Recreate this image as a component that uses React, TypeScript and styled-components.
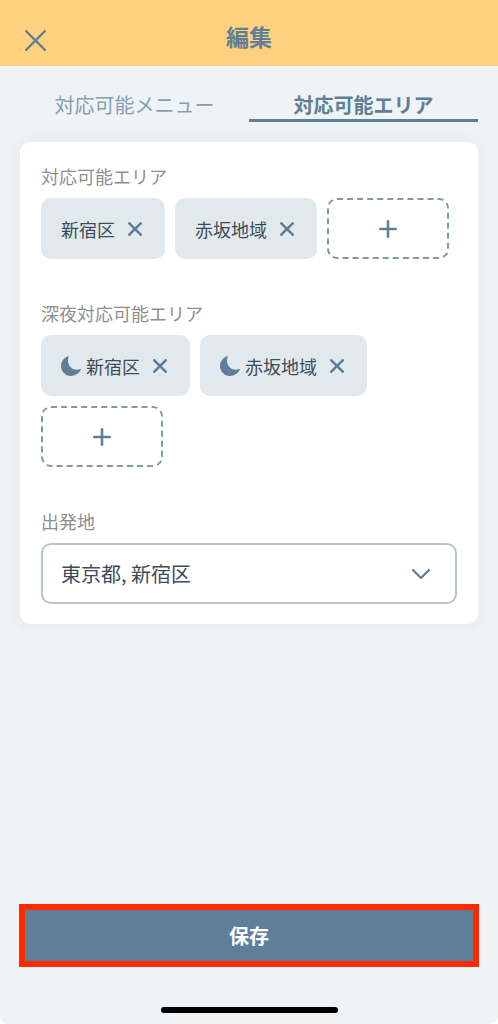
import React, { useState } from "react";
import styled, { createGlobalStyle } from "styled-components";

const GlobalStyle = createGlobalStyle`
  *, *::before, *::after { box-sizing: border-box; }
  body {
    margin: 0;
    background: #ffffff;
    font-family: "Noto Sans CJK JP", "Noto Sans", sans-serif;
    color: #3c4c59;
  }
  button, select { font-family: inherit; }
  button { margin: 0; padding: 0; border: 0; background: none; cursor: pointer; }
`;

const accent = "#5f7f98";

const Screen = styled.div`
  display: flex;
  flex-direction: column;
  min-height: 100vh;
  background: #eff3f6;
  border-radius: 0 0 8px 8px;
`;

const Header = styled.header`
  display: grid;
  grid-template-columns: 24px 1fr 24px;
  align-items: end;
  height: 66px;
  padding: 0 23px 14px;
  background: #ffd17f;
`;

const Title = styled.h1`
  margin: 0;
  font-size: 23px;
  line-height: 32px;
  font-weight: 700;
  text-align: center;
  color: ${accent};
`;

const IconButton = styled.button<{ $size: number }>`
  display: flex;
  align-items: center;
  justify-content: center;
  width: ${(p) => p.$size}px;
  height: ${(p) => p.$size}px;
  color: ${accent};
`;

const Tabs = styled.div`
  display: flex;
  padding: 0 20px;
`;

const Tab = styled.button<{ $active: boolean }>`
  flex: 1;
  height: 56px;
  padding-top: 24px;
  border-bottom: 3px solid ${(p) => (p.$active ? accent : "transparent")};
  font-size: 20px;
  line-height: 29px;
  font-weight: ${(p) => (p.$active ? 700 : 400)};
  color: ${(p) => (p.$active ? accent : "#869eb1")};
`;

const Main = styled.main`
  flex: 1;
  padding: 20px;
`;

const Card = styled.div`
  display: flex;
  flex-direction: column;
  gap: 41px;
  padding: 21px 21px 20px;
  border-radius: 10px;
  background: #ffffff;
  box-shadow: 0 0 12px 2px rgba(60, 70, 80, 0.05);
`;

const Section = styled.section`
  display: flex;
  flex-direction: column;
  gap: 9px;
`;

const Label = styled.label`
  font-size: 18px;
  line-height: 26px;
  color: #8e8e8e;
`;

const Heading = styled(Label).attrs({ as: "h2" })`
  margin: 0;
  font-weight: 400;
`;

const Chips = styled.div`
  display: flex;
  flex-wrap: wrap;
  gap: 10px;
`;

const Chip = styled.div`
  display: flex;
  align-items: center;
  height: 61px;
  padding: 0 20px;
  border-radius: 10px;
  background: #e2e9ec;
`;

const ChipText = styled.span<{ $night?: boolean }>`
  margin: 0 10px 0 ${(p) => (p.$night ? 5 : 0)}px;
  font-size: 18px;
  line-height: 26px;
`;

const AddButton = styled.button`
  display: flex;
  align-items: center;
  justify-content: center;
  width: 122px;
  height: 61px;
  border: 2px dashed #7f98ac;
  border-radius: 10px;
  color: ${accent};
`;

const SelectBox = styled.div`
  position: relative;
  color: ${accent};
`;

const Select = styled.select`
  display: block;
  width: 100%;
  height: 61px;
  padding: 0 50px 0 18px;
  border: 2px solid #b8c5cf;
  border-radius: 10px;
  appearance: none;
  background: #ffffff;
  font-size: 20px;
  color: #3c4c59;
`;

const Chevron = styled.svg`
  position: absolute;
  top: 50%;
  right: 26px;
  transform: translateY(-50%);
  pointer-events: none;
`;

const Footer = styled.footer`
  display: flex;
  flex-direction: column;
  align-items: center;
  gap: 40px;
  padding: 0 19px 11px;
`;

const SaveButton = styled.button`
  width: 100%;
  height: 63px;
  border: 6px solid #ff2a00;
  background: ${accent};
  font-size: 20px;
  line-height: 30px;
  font-weight: 700;
  color: #ffffff;
`;

const HomeIndicator = styled.div`
  width: 177px;
  height: 6px;
  border-radius: 3px;
  background: #000000;
`;

const Cross = ({ size, weight }: { size: number; weight: number }) => {
  const a = weight / 2;
  const b = size - a;
  return (
    <svg width={size} height={size} viewBox={`0 0 ${size} ${size}`} fill="none" stroke="currentColor" strokeWidth={weight} strokeLinecap="round" aria-hidden="true">
      <path d={`M${a} ${a}L${b} ${b}M${b} ${a}L${a} ${b}`} />
    </svg>
  );
};

const Moon = () => (
  <svg width="20" height="20" viewBox="0 0 20 20" fill={accent} aria-hidden="true">
    <path d="M6.9 0.2C2.8 1.8 0 5.7 0 10.1C0 15.6 4.4 20 9.9 20C14.3 20 18.4 17.3 19.9 13.6C20.1 13.1 19.7 12.8 19.2 13C11.8 16 4.9 9.2 7.6 0.9C7.8 0.3 7.5 0 6.9 0.2Z" />
  </svg>
);

const Plus = () => (
  <svg width="18" height="18" viewBox="0 0 18 18" fill="none" stroke="currentColor" strokeWidth="2.6" strokeLinecap="round" aria-hidden="true">
    <path d="M9 1.3V16.7M1.3 9H16.7" />
  </svg>
);

const AreaChips = ({ initial, night, addLabel }: { initial: string[]; night?: boolean; addLabel: string }) => {
  const [areas, setAreas] = useState(initial);
  return (
    <Chips>
      {areas.map((area) => (
        <Chip key={area}>
          {night && <Moon />}
          <ChipText $night={night}>{area}</ChipText>
          <IconButton $size={20} aria-label={`${area}を削除`} onClick={() => setAreas(areas.filter((a) => a !== area))}>
            <Cross size={14} weight={2.6} />
          </IconButton>
        </Chip>
      ))}
      <AddButton aria-label={addLabel}>
        <Plus />
      </AddButton>
    </Chips>
  );
};

const tabs = ["対応可能メニュー", "対応可能エリア"];
const areas = ["新宿区", "赤坂地域"];

export default function App() {
  const [active, setActive] = useState(1);
  return (
    <>
      <GlobalStyle />
      <Screen>
        <Header>
          <IconButton $size={24} aria-label="閉じる">
            <Cross size={21} weight={2.2} />
          </IconButton>
          <Title>編集</Title>
        </Header>
        <Tabs role="tablist">
          {tabs.map((name, i) => (
            <Tab key={name} role="tab" aria-selected={i === active} $active={i === active} onClick={() => setActive(i)}>
              {name}
            </Tab>
          ))}
        </Tabs>
        <Main>
          <Card>
            <Section>
              <Heading>対応可能エリア</Heading>
              <AreaChips initial={areas} addLabel="エリアを追加" />
            </Section>
            <Section>
              <Heading>深夜対応可能エリア</Heading>
              <AreaChips initial={areas} night addLabel="深夜エリアを追加" />
            </Section>
            <Section>
              <Label htmlFor="departure">出発地</Label>
              <SelectBox>
                <Select id="departure" defaultValue="東京都, 新宿区">
                  <option>東京都, 新宿区</option>
                </Select>
                <Chevron width="20" height="12" viewBox="0 0 20 12" fill="none" stroke="currentColor" strokeWidth="2.2" strokeLinecap="round" strokeLinejoin="round" aria-hidden="true">
                  <path d="M2 2L10 10L18 2" />
                </Chevron>
              </SelectBox>
            </Section>
          </Card>
        </Main>
        <Footer>
          <SaveButton>保存</SaveButton>
          <HomeIndicator />
        </Footer>
      </Screen>
    </>
  );
}
